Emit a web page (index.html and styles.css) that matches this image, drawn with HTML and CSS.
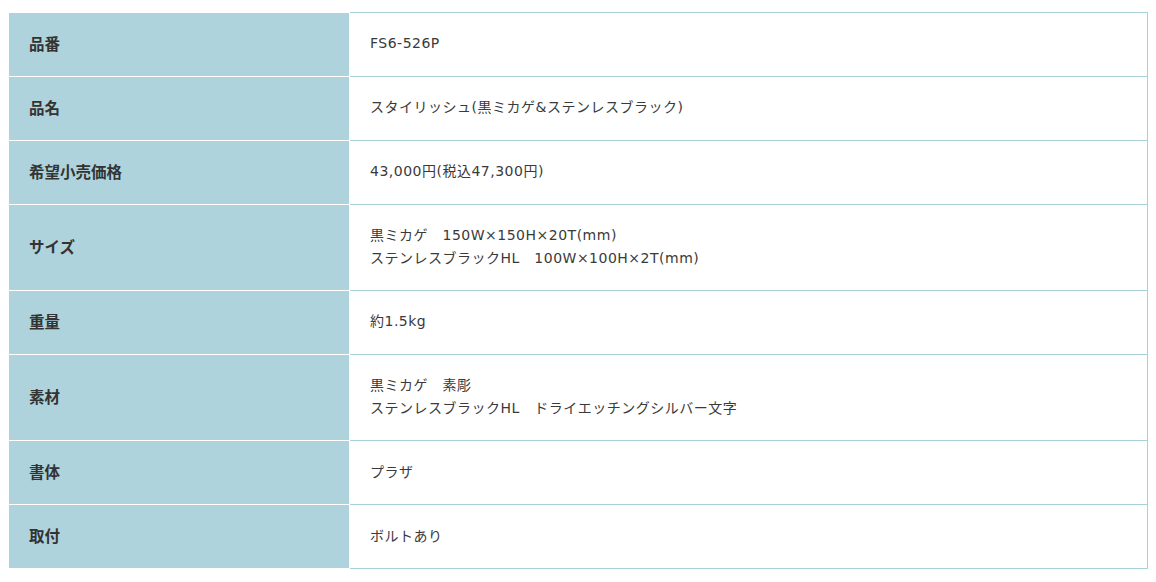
FILE: index.html
```html
<!DOCTYPE html>
<html lang="ja">
<head>
<meta charset="utf-8">
<link rel="stylesheet" href="styles.css">
</head>
<body>
<table class="spec">
  <tr><th>品番</th><td>FS6-526P</td></tr>
  <tr><th>品名</th><td>スタイリッシュ(黒ミカゲ&amp;ステンレスブラック)</td></tr>
  <tr><th>希望小売価格</th><td>43,000円(税込47,300円)</td></tr>
  <tr><th>サイズ</th><td>黒ミカゲ　150W×150H×20T(mm)<br>ステンレスブラックHL　100W×100H×2T(mm)</td></tr>
  <tr><th>重量</th><td>約1.5kg</td></tr>
  <tr><th>素材</th><td>黒ミカゲ　素彫<br>ステンレスブラックHL　ドライエッチングシルバー文字</td></tr>
  <tr><th>書体</th><td>プラザ</td></tr>
  <tr><th>取付</th><td>ボルトあり</td></tr>
</table>
</body>
</html>
```

FILE: styles.css
```css
body {
  margin: 8px;
  background: #fff;
  font-family: "DejaVu Sans", "Noto Sans CJK JP", sans-serif;
  color: #333;
}
.spec {
  width: 100%;
  margin-top: 4px;
  border-collapse: collapse;
  font-size: 14px;
  line-height: 23px;
}
.spec th {
  width: 300px;
  background: #afd3dc;
  border: 1px solid #fff;
  text-align: left;
  font-family: "Noto Sans CJK JP", sans-serif;
  font-size: 15.5px;
  line-height: 23px;
  font-weight: bold;
  padding: 19px 20px 21px;
  color: #333;
}
.spec td {
  border: 1px solid #a9d1da;
  padding: 19px 20px 21px;
  line-height: 22.6px;
  letter-spacing: 0.5px;
  color: #3a3a3a;
}
```
